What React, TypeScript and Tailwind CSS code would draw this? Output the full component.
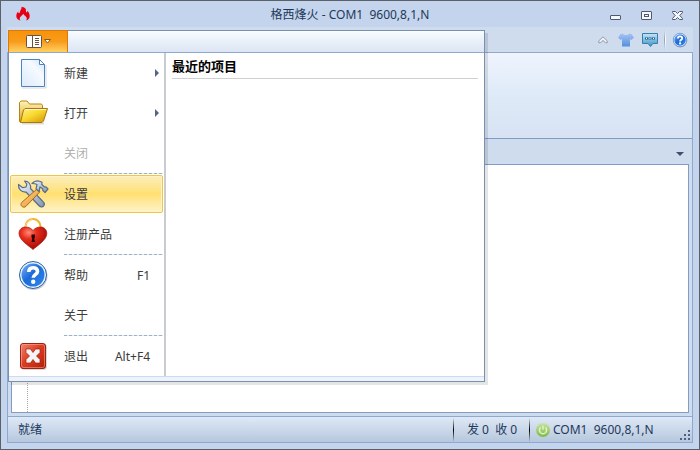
import type { ReactNode } from 'react'

type MenuEntry = {
  label: string
  icon?: ReactNode
  shortcut?: string
  submenu?: boolean
  disabled?: boolean
  active?: boolean
  separator?: boolean
}

function FlameIcon() {
  return (
    <svg width="14" height="16" viewBox="0 0 14 16" fill="#e60012" aria-hidden="true">
      <path d="M5.500.8C8.500 1 10.300 2.700 10 5c-.1.900.1 1.300.6 1.300s.8-.6.700-1.600c1.500 1.300 2.400 3.300 2.400 5.300 0 2.400-1.400 4-3.900 4.500 1.200-1 1.300-2.300.4-3.500-.9-1.100-2.200-1.800-3-3.200-.7 1.500-2 2.100-2.900 3.200-.9 1.200-.8 2.500.4 3.500C2 14 .3 12.400.3 10c0-1.900.7-3.300 2-4.500-.1 1 .1 1.700.7 1.700.9 0 .9-1 1.200-2.200.3-1.300 1.900-2.200 1.300-4.200z" />
    </svg>
  )
}

function PageIcon() {
  return (
    <svg width="32" height="32" viewBox="0 0 32 32" aria-hidden="true">
      <defs>
        <linearGradient id="page" x1="1" y1="0" x2="0" y2="1">
          <stop offset="0" stopColor="#cfe2f6" />
          <stop offset=".35" stopColor="#f5faff" />
          <stop offset="1" stopColor="#dceaf9" />
        </linearGradient>
      </defs>
      <path d="M5 31h24V8" fill="none" stroke="#000" strokeOpacity=".15" />
      <path d="M4.500 2.500h18l5 5v22h-23z" fill="url(#page)" stroke="#4c83c3" />
      <path d="M22.500 2.500v5h5z" fill="#fff" stroke="#4c83c3" />
    </svg>
  )
}

function FolderIcon() {
  return (
    <svg width="32" height="32" viewBox="0 0 32 32" aria-hidden="true">
      <defs>
        <linearGradient id="folderBack" x1="0" y1="0" x2="0" y2="1">
          <stop offset="0" stopColor="#fff3b5" />
          <stop offset="1" stopColor="#dba51f" />
        </linearGradient>
        <linearGradient id="folderFront" x1="0" y1="0" x2="1" y2="1">
          <stop offset="0" stopColor="#fff199" />
          <stop offset=".45" stopColor="#f9d92f" />
          <stop offset="1" stopColor="#cf9408" />
        </linearGradient>
      </defs>
      <path d="M5 26.500h22" stroke="#000" strokeOpacity=".15" strokeWidth="2" />
      <path d="M2.500 24V5.500L4 4h6l2.500 3h12l1 1.500V13L23 25H3z" fill="url(#folderBack)" stroke="#b98313" />
      <path d="M8 11.500h22.500L26.500 24l-1.500 1.500H3.500L6.500 13z" fill="url(#folderFront)" stroke="#ad7709" />
      <path d="M8.500 12.500h20.500" stroke="#fff8c9" />
    </svg>
  )
}

function ToolsIcon() {
  return (
    <svg width="32" height="32" viewBox="0 0 32 32" strokeLinejoin="round" aria-hidden="true">
      <defs>
        <linearGradient id="steel" x1="0" y1="0" x2="1" y2="1">
          <stop offset="0" stopColor="#f2f5f9" />
          <stop offset=".5" stopColor="#bac8da" />
          <stop offset="1" stopColor="#8396b0" />
        </linearGradient>
        <linearGradient id="handle" x1="0" y1="0" x2="1" y2="1">
          <stop offset="0" stopColor="#ffe3a1" />
          <stop offset="1" stopColor="#e48618" />
        </linearGradient>
      </defs>
      <path
        d="M1.500 6.500C1 11 4.500 14.500 9 14l13.300 14c1.500 1.300 3.500 1 4.400-.2.900-1.200.8-2.700-.2-3.700L13.500 10.500C14.300 6.500 11.500 3 7.500 3l2.300 3.200-.8 2.800-3.300.7z"
        fill="url(#steel)"
        stroke="#5b6b85"
        strokeWidth="1.200"
      />
      <path d="M20 11l3 2.700L9 28.300c-1.300 1.300-3 1-4.200 0s-1.100-2.700.1-4z" fill="url(#handle)" stroke="#ae6a16" />
      <path
        d="M15 5.500C17.500 2.800 21.500 2.300 25 4.300l-.2 2.200 2.700 2.500 1.500-.2 2 2.200-3 3.500-2.300-2.200v-1.500L23 9l-1 4.500-3-2.700 1-4.300c-1.700-1-3.300-1-5-1z"
        fill="url(#steel)"
        stroke="#5b6b85"
        strokeWidth="1.200"
      />
    </svg>
  )
}

function HeartLockIcon() {
  return (
    <svg width="32" height="34" viewBox="0 0 32 34" aria-hidden="true">
      <defs>
        <radialGradient id="heart" cx=".35" cy=".25" r=".8">
          <stop offset="0" stopColor="#ff8a76" />
          <stop offset=".35" stopColor="#e82d1c" />
          <stop offset="1" stopColor="#9a0604" />
        </radialGradient>
      </defs>
      <path d="M8.500 12V9.500a7.500 7.500 0 0 1 15 0V12" fill="none" stroke="#f3b229" strokeWidth="2" />
      <path d="M8.500 10a7.500 7.500 0 0 1 7-7.500" fill="none" stroke="#ffdf80" />
      <path
        d="M16 32.500C12 29 2 23 2 16.500c0-4 3-6.500 6.500-6.500 3.300 0 6 1.500 7.500 3.500C17.500 11.500 20.200 10 23.500 10c3.500 0 6.300 2.500 6.300 6.500C29.800 23 20 29 16 32.500z"
        fill="url(#heart)"
        stroke="#a8150c"
        strokeWidth=".7"
      />
      <path d="M14.500 17.500H18v3l-.8.800.8 3.700h-3.500l.8-3.700-.8-.8z" fill="#2b0503" />
    </svg>
  )
}

function HelpIcon({ size }: { size: number }) {
  return (
    <svg width={size} height={size} viewBox="0 0 32 32" aria-hidden="true">
      <defs>
        <linearGradient id="help" x1="0" y1="0" x2="1" y2="1">
          <stop offset="0" stopColor="#7cb6f5" />
          <stop offset=".45" stopColor="#1c6bdb" />
          <stop offset="1" stopColor="#2f86ea" />
        </linearGradient>
      </defs>
      <circle cx="16.500" cy="17" r="14" fill="#000" fillOpacity=".2" />
      <circle cx="16" cy="16" r="13.500" fill="#eaf3fd" stroke="#2360b0" />
      <circle cx="16" cy="16" r="11.500" fill="url(#help)" />
      <path
        d="M11.800 13c0-2.800 1.800-4.300 4.400-4.300s4.300 1.500 4.300 3.700c0 3.200-4.300 3.300-4.300 6.400"
        fill="none"
        stroke="#fff"
        strokeWidth="3.600"
      />
      <circle cx="16.200" cy="22.800" r="2.200" fill="#fff" />
    </svg>
  )
}

function ExitIcon() {
  return (
    <svg width="32" height="32" viewBox="0 0 32 32" aria-hidden="true">
      <defs>
        <linearGradient id="exit" x1="0" y1="0" x2="1" y2="1">
          <stop offset="0" stopColor="#f0866f" />
          <stop offset=".45" stopColor="#dd3f24" />
          <stop offset="1" stopColor="#b31c06" />
        </linearGradient>
      </defs>
      <rect x="4" y="4" width="26" height="26" rx="3" fill="#000" fillOpacity=".15" />
      <rect x="3.500" y="3.500" width="25" height="25" rx="2.500" fill="url(#exit)" stroke="#9c2311" />
      <rect x="4.500" y="4.500" width="23" height="23" rx="2" fill="none" stroke="#ffb5a3" strokeOpacity=".5" />
      <path
        d="M9 9h4.500l2.500 3.500L18.500 9H23v3.500L19.500 16l3.500 3.500V23h-4.500L16 19.500 13.500 23H9v-3.500l3.500-3.500L9 12.500z"
        fill="#f6f4f4"
        stroke="#a3200d"
        strokeWidth=".7"
      />
    </svg>
  )
}

function PowerIcon() {
  return (
    <svg width="14" height="14" viewBox="0 0 14 14" aria-hidden="true">
      <defs>
        <linearGradient id="power" x1="0" y1="0" x2="0" y2="1">
          <stop offset="0" stopColor="#c9e4a4" />
          <stop offset="1" stopColor="#7dbb45" />
        </linearGradient>
      </defs>
      <circle cx="7" cy="7" r="7" fill="url(#power)" />
      <path d="M4.500 4.500a3.600 3.600 0 1 0 5 0M7 2.800v4" fill="none" stroke="#e3f2cf" strokeWidth="1.400" />
    </svg>
  )
}

const entries: MenuEntry[] = [
  { label: '新建', icon: <PageIcon />, submenu: true },
  { label: '打开', icon: <FolderIcon />, submenu: true },
  { label: '关闭', disabled: true },
  { label: '设置', icon: <ToolsIcon />, active: true, separator: true },
  { label: '注册产品', icon: <HeartLockIcon /> },
  { label: '帮助', icon: <HelpIcon size={32} />, shortcut: 'F1', separator: true },
  { label: '关于' },
  { label: '退出', icon: <ExitIcon />, shortcut: 'Alt+F4', separator: true },
]

function MenuItem({ label, icon, shortcut, submenu, disabled, active, separator }: MenuEntry) {
  return (
    <li>
      {separator && <div className="ml-[54px] h-px bg-[repeating-linear-gradient(90deg,#9bb1cc_0_3px,#e3eaf3_3px_5px)]" />}
      <div className="py-px">
        <button
          type="button"
          disabled={disabled}
          className={`flex h-[38px] w-full items-center rounded-[2px] border text-left ${
            active
              ? 'border-[#efc64c] bg-linear-to-b from-[#fbeebb] via-[#ffe06f] to-[#fdf3c9] shadow-[inset_0_0_0_1px_#fff3c4]'
              : 'border-transparent'
          } ${disabled ? 'text-[#b0b0b0]' : 'text-[#3b3b3b]'}`}
        >
          <span className="flex w-11 justify-center">{icon}</span>
          <span className="ml-[9px] flex-1 pt-0.5">{label}</span>
          {shortcut && <span className="pt-0.5 pr-3">{shortcut}</span>}
          {submenu && (
            <svg width="4" height="8" viewBox="0 0 4 8" className="mr-[3px]" aria-hidden="true">
              <path d="M0 0l4 4-4 4z" fill="#53658a" />
            </svg>
          )}
        </button>
      </div>
    </li>
  )
}

function AppMenu() {
  return (
    <div className="absolute left-[7px] top-[29px] w-[477px] border border-[#7b8fae] bg-white shadow-[3px_3px_0_rgba(0,0,0,0.1)]">
      <div className="flex h-[22px] border-b border-[#8ea9cf] bg-linear-to-b from-[#f9fcff] via-[#e9f0f9] to-[#dce5f4]">
        <button
          type="button"
          aria-label="菜单"
          className="-ml-px -mt-px flex w-[60px] items-center justify-center gap-0.5 border border-b-0 border-[#df770b] bg-linear-to-b from-[#f6930d] via-[#f89c18] to-[#ffd15f]"
        >
          <svg width="16" height="13" viewBox="0 0 16 13" aria-hidden="true">
            <rect x=".5" y=".5" width="15" height="12" rx="1" fill="#fff" stroke="#69533a" />
            <path d="M6.500 1v11M9 3.500h4M9 5.500h4M9 7.500h4M9 9.500h4" stroke="#69533a" />
          </svg>
          <svg width="7" height="5" viewBox="0 0 7 5" aria-hidden="true">
            <path d="M.5.5h6l-3 3.500z" fill="#fff" stroke="#8c5a18" />
          </svg>
        </button>
      </div>
      <div className="flex">
        <ul className="w-[155px] px-px">
          {entries.map((entry) => (
            <MenuItem key={entry.label} {...entry} />
          ))}
        </ul>
        <div className="flex-1 border-l-2 border-[#c8cbd0] px-1.5">
          <h2 className="h-[26px] border-b border-[#d0d0d0] text-[13px] leading-[26px] font-bold text-black">最近的项目</h2>
        </div>
      </div>
      <div className="h-[5px] border-t border-[#cfdbed] bg-[#edf3fc]" />
    </div>
  )
}

function TitleBar() {
  return (
    <header className="relative flex h-[26px] items-center justify-between pr-2.5 pl-[9px]">
      <FlameIcon />
      <h1 className="absolute inset-x-0 top-1.5 text-center whitespace-pre">格西烽火 - COM1  9600,8,1,N</h1>
      <div className="flex gap-5 pt-1">
        <button type="button" aria-label="最小化">
          <svg width="11" height="10" viewBox="0 0 11 10" aria-hidden="true">
            <rect x=".5" y="4.500" width="10" height="4" rx=".5" fill="#f4f7fc" stroke="#4f5a70" />
          </svg>
        </button>
        <button type="button" aria-label="最大化">
          <svg width="11" height="10" viewBox="0 0 11 10" fill="#f4f7fc" stroke="#4f5a70" aria-hidden="true">
            <rect x=".5" y=".5" width="10" height="8" rx=".5" />
            <rect x="3.500" y="3.500" width="4" height="2" />
          </svg>
        </button>
        <button type="button" aria-label="关闭窗口">
          <svg width="11" height="10" viewBox="0 0 11 10" aria-hidden="true">
            <path
              d="M.5.5h3l2 2 2-2h3v1L7.800 4.500l2.700 3v1h-3l-2-2-2 2h-3v-1l2.700-3L.5 1.500z"
              fill="#f4f7fc"
              stroke="#4f5a70"
            />
          </svg>
        </button>
      </div>
    </header>
  )
}

function QuickTools() {
  return (
    <div className="flex h-[25px] items-center justify-end bg-[#cfdcee] pr-[5px]">
      <button type="button" aria-label="折叠功能区" className="mr-2.5">
        <svg width="10" height="8" viewBox="0 0 10 8" aria-hidden="true">
          <path d="M5 .8L.8 4.800v2h1.500L5 4.500l2.700 2.300h1.500v-2z" fill="#eef2f8" stroke="#8e9aab" />
        </svg>
      </button>
      <button type="button" aria-label="皮肤" className="mr-2">
        <svg width="16" height="14" viewBox="0 0 16 14" aria-hidden="true">
          <defs>
            <linearGradient id="shirt" x1="0" y1="0" x2="0" y2="1">
              <stop offset="0" stopColor="#a5c3f2" />
              <stop offset="1" stopColor="#5590e0" />
            </linearGradient>
          </defs>
          <path d="M5 .5C6 2.500 10 2.500 11 .5L13.500 1 16 4.500 13.500 7 12 6v7.500H4V6L2.500 7 0 4.500 2.500 1z" fill="url(#shirt)" />
        </svg>
      </button>
      <button type="button" aria-label="留言">
        <svg width="16" height="14" viewBox="0 0 16 14" aria-hidden="true">
          <defs>
            <linearGradient id="chat" x1="0" y1="0" x2="0" y2="1">
              <stop offset="0" stopColor="#c3e6f8" />
              <stop offset="1" stopColor="#3a93c9" />
            </linearGradient>
          </defs>
          <path d="M.5.5h15v10H11l-2.500 3-2.500-3H.5z" fill="url(#chat)" stroke="#3a7caa" />
          <path d="M3 4.500h3v2H3zM6.500 4.500h3v2h-3zM10 4.500h3v2h-3z" fill="#24608c" />
          <path d="M4 5h1v1H4zM7.500 5h1v1h-1zM11 5h1v1h-1z" fill="#fff" />
        </svg>
      </button>
      <div className="mx-1.5 flex h-5">
        <div className="w-px bg-linear-to-b from-transparent via-[#8fa3c0] to-transparent" />
        <div className="w-px bg-linear-to-b from-transparent via-white to-transparent" />
      </div>
      <button type="button" aria-label="帮助">
        <HelpIcon size={16} />
      </button>
    </div>
  )
}

function StatusDivider() {
  return <div className="h-6 w-px bg-linear-to-b from-transparent via-black to-transparent" />
}

function StatusBar() {
  return (
    <footer className="flex h-[27px] items-center border-y border-[#8ea8cf] bg-linear-to-b from-[#dfe9f6] to-[#b6c7dd] pl-2.5 whitespace-pre">
      <span className="flex-1">就绪</span>
      <StatusDivider />
      <span className="w-[75px] pl-[13px]">发 0  收 0</span>
      <StatusDivider />
      <span className="flex w-[150px] items-center gap-[3px] pl-1.5">
        <PowerIcon />
        COM1  9600,8,1,N
      </span>
      <svg width="11" height="11" viewBox="0 0 11 11" className="mr-px mb-px self-end" fill="#4f6182" aria-hidden="true">
        <path d="M8 0h2v2H8zM4 4h2v2H4zM8 4h2v2H8zM0 8h2v2H0zM4 8h2v2H4zM8 8h2v2H8z" />
      </svg>
    </footer>
  )
}

export default function App() {
  return (
    <div className="relative flex h-screen min-h-[400px] flex-col border border-[#5c6068] bg-[#c3d4ec] px-1.5 pb-1.5 font-['Noto_Sans','Noto_Sans_CJK_SC',sans-serif] text-xs leading-4 text-[#1e395b]">
      <TitleBar />
      <QuickTools />
      <main className="flex flex-1 flex-col border-x border-t border-[#8ea8cf] bg-[#cfdcee]">
        <div className="h-[86px] border-b border-[#7f9dc6] bg-linear-to-b from-[#eff4fd] via-[#deeaf8] to-[#d7e3f2]" />
        <div className="flex h-[25px] items-center justify-end pr-2">
          <button type="button" aria-label="标签列表" className="pt-1">
            <svg width="8" height="4" viewBox="0 0 8 4" aria-hidden="true">
              <path d="M0 0h8L4 4z" fill="#3f4f70" />
            </svg>
          </button>
        </div>
        <div className="mx-[3px] mb-[3px] flex flex-1 border border-[#7f9dc6] bg-white">
          <div className="w-4 border-r border-dotted border-[#a5a5a5]" />
          <textarea aria-label="内容" className="flex-1 resize-none outline-none" />
        </div>
        <StatusBar />
      </main>
      <AppMenu />
    </div>
  )
}
